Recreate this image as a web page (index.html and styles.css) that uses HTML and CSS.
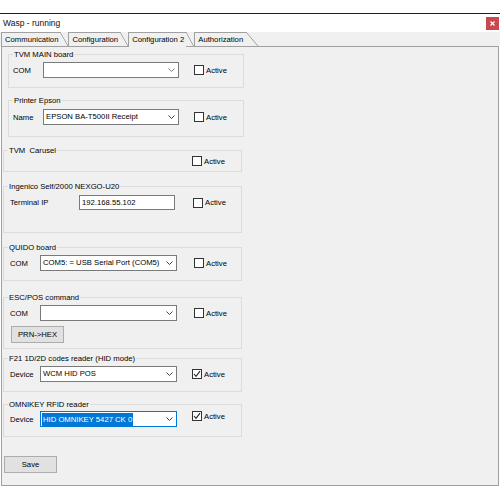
FILE: index.html
```html
<!DOCTYPE html>
<html>
<head>
<meta charset="utf-8">
<title>Wasp - running</title>
<link rel="stylesheet" href="styles.css">
</head>
<body>
<div class="screen">
  <div class="top-gap"></div>
  <div class="titlebar">
    <span class="title">Wasp - running</span>
    <span class="close"><svg width="5" height="5" viewBox="0 0 5 5"><path d="M0.5 0.5 L4.5 4.5 M4.5 0.5 L0.5 4.5" stroke="#fff" stroke-width="1.2" fill="none"/></svg></span>
  </div>
  <div class="tabstrip">
    <div class="tab">Communication</div>
    <div class="tab">Configuration</div>
    <div class="tab active">Configuration 2</div>
    <div class="tab last">Authorization</div>
  </div>
  <div class="panel">
    <div class="group g-main">
      <span class="legend">TVM MAIN board</span>
      <div class="row">
        <span class="label lw30">COM</span>
        <div class="combo"><span class="value"></span><svg class="chev" width="7" height="4" viewBox="0 0 7 4"><polyline points="0.5,0.5 3.5,3.5 6.5,0.5" fill="none" stroke="#888" stroke-width="1"/></svg></div>
        <div class="check c15"><span class="box"></span><span>Active</span></div>
      </div>
    </div>

    <div class="group g-printer">
      <span class="legend">Printer Epson</span>
      <div class="row">
        <span class="label lw30">Name</span>
        <div class="combo"><span class="value">EPSON BA-T500II Receipt</span><svg class="chev" width="7" height="4" viewBox="0 0 7 4"><polyline points="0.5,0.5 3.5,3.5 6.5,0.5" fill="none" stroke="#444" stroke-width="1"/></svg></div>
        <div class="check c15"><span class="box"></span><span>Active</span></div>
      </div>
    </div>

    <div class="group g-carusel">
      <span class="legend">TVM&nbsp; Carusel</span>
      <div class="row">
        <div class="check"><span class="box"></span><span>Active</span></div>
      </div>
    </div>

    <div class="group g-ingenico">
      <span class="legend">Ingenico Self/2000 NEXGO-U20</span>
      <div class="row">
        <span class="label lw69">Terminal IP</span>
        <div class="field">192.168.55.102</div>
        <div class="check c18"><span class="box"></span><span>Active</span></div>
      </div>
    </div>

    <div class="group g-quido">
      <span class="legend">QUIDO board</span>
      <div class="row">
        <span class="label lw30">COM</span>
        <div class="combo wide"><span class="value">COM5: = USB Serial Port (COM5)</span><svg class="chev" width="7" height="4" viewBox="0 0 7 4"><polyline points="0.5,0.5 3.5,3.5 6.5,0.5" fill="none" stroke="#444" stroke-width="1"/></svg></div>
        <div class="check"><span class="box"></span><span>Active</span></div>
      </div>
    </div>

    <div class="group g-escpos">
      <span class="legend">ESC/POS command</span>
      <div class="row">
        <span class="label lw30">COM</span>
        <div class="combo wide"><span class="value"></span><svg class="chev" width="7" height="4" viewBox="0 0 7 4"><polyline points="0.5,0.5 3.5,3.5 6.5,0.5" fill="none" stroke="#444" stroke-width="1"/></svg></div>
        <div class="check"><span class="box"></span><span>Active</span></div>
      </div>
      <button class="btn prn">PRN-&gt;HEX</button>
    </div>

    <div class="group g-f21">
      <span class="legend">F21 1D/2D codes reader (HID mode)</span>
      <div class="row">
        <span class="label lw30">Device</span>
        <div class="combo wide"><span class="value">WCM HID POS</span><svg class="chev" width="7" height="4" viewBox="0 0 7 4"><polyline points="0.5,0.5 3.5,3.5 6.5,0.5" fill="none" stroke="#444" stroke-width="1"/></svg></div>
        <div class="check c15"><span class="box"><svg width="8" height="8" viewBox="0 0 8 8"><path d="M1 4 L3 6.3 L7 1.2" fill="none" stroke="#222" stroke-width="1.1"/></svg></span><span>Active</span></div>
      </div>
    </div>

    <div class="group g-omni">
      <span class="legend">OMNIKEY RFID reader</span>
      <div class="row">
        <span class="label lw30">Device</span>
        <div class="combo wide focus"><span class="value sel">HID OMNIKEY 5427 CK 0</span><svg class="chev" width="7" height="4" viewBox="0 0 7 4"><polyline points="0.5,0.5 3.5,3.5 6.5,0.5" fill="none" stroke="#444" stroke-width="1"/></svg></div>
        <div class="check c15 top"><span class="box"><svg width="8" height="8" viewBox="0 0 8 8"><path d="M1 4 L3 6.3 L7 1.2" fill="none" stroke="#222" stroke-width="1.1"/></svg></span><span>Active</span></div>
      </div>
    </div>

    <button class="btn save">Save</button>
  </div>
</div>
</body>
</html>
```

FILE: styles.css
```css
* { box-sizing: border-box; }
html, body { margin: 0; padding: 0; background: #fff; }
body {
  width: 500px;
  height: 500px;
  overflow: hidden;
  font-family: "Liberation Sans", Arial, sans-serif;
  font-size: 7.7px;
  color: #000;
}
.top-gap { height: 14px; border-bottom: 1px solid #1e1e1e; }
.titlebar {
  height: 18px;
  display: flex;
  align-items: center;
  justify-content: space-between;
  padding: 0 1px 0 3px;
  background: #fff;
}
.title { font-size: 8.5px; color: #111; }
.close {
  width: 13px;
  height: 13px;
  background: #c9474e;
  display: flex;
  align-items: center;
  justify-content: center;
}
.close svg { display: block; }

.tabstrip {
  height: 14px;
  background: #f0f0f0;
  display: flex;
  align-items: flex-start;
  padding-left: 1px;
}
.tab {
  height: 14px;
  line-height: 13px;
  padding: 1px 10px 0 4px;
  white-space: nowrap;
  background:
    linear-gradient(#a0a0a0, #a0a0a0) left top / calc(100% - 8px) 1px no-repeat,
    linear-gradient(#a0a0a0, #a0a0a0) left top / 1px 100% no-repeat,
    linear-gradient(to bottom left, transparent calc(50% - 0.7px), #9a9a9a 50%, transparent calc(50% + 0.7px)) right top / 8px 100% no-repeat;
}
.tab.active {
  position: relative;
  z-index: 1;
  height: 15px;
  margin-bottom: -1px;
  background:
    linear-gradient(#a0a0a0, #a0a0a0) left top / calc(100% - 8px) 1px no-repeat,
    linear-gradient(#a0a0a0, #a0a0a0) left top / 1px 100% no-repeat,
    linear-gradient(to bottom left, transparent calc(50% - 0.7px), #9a9a9a 50%, transparent calc(50% + 0.7px)) right top / 8px 100% no-repeat,
    linear-gradient(#f0f0f0, #f0f0f0) 1px bottom / calc(100% - 9px) 1px no-repeat;
}
.tab.last {
  padding-right: 15px;
  background:
    linear-gradient(#a0a0a0, #a0a0a0) left top / calc(100% - 12px) 1px no-repeat,
    linear-gradient(#a0a0a0, #a0a0a0) left top / 1px 100% no-repeat,
    linear-gradient(to bottom left, transparent calc(50% - 0.7px), #9a9a9a 50%, transparent calc(50% + 0.7px)) right top / 12px 100% no-repeat;
}

.panel {
  margin-left: 1px;
  width: 498px;
  height: 440px;
  border: 1px solid #a0a0a0;
  background: #f0f0f0;
  padding-top: 7px;
}

.group {
  position: relative;
  border: 1px solid #dcdcdc;
  width: 239px;
  margin-left: 1px;
}
.legend {
  position: absolute;
  top: -5px;
  left: 4px;
  line-height: 9px;
  padding: 0 1px;
  background: #f0f0f0;
  white-space: nowrap;
}
.g-main { margin-left: 6px; width: 236px; height: 34px; padding: 7px 0 0 4px; }
.g-printer { margin: 12px 0 0 6px; width: 236px; height: 37px; padding: 8px 0 0 4px; }
.g-carusel { margin-top: 13px; height: 22px; padding: 5px 0 0 188px; }
.g-ingenico { margin-top: 14px; height: 47px; padding: 8px 0 0 6px; }
.g-quido { margin-top: 14px; height: 34px; padding: 7px 0 0 6px; }
.g-escpos { margin-top: 16px; height: 52px; padding: 7px 0 0 6px; }
.g-f21 { margin-top: 9px; height: 34px; padding: 7px 0 0 6px; }
.g-omni { margin-top: 12px; height: 33px; padding: 6px 0 0 6px; }

.row { display: flex; align-items: center; }
.label { white-space: nowrap; }
.lw30 { width: 30px; }
.lw69 { width: 69px; }

.combo {
  width: 136px;
  height: 16px;
  border: 1px solid #7a7a7a;
  background: #fff;
  display: flex;
  align-items: center;
  justify-content: space-between;
  padding: 0 3px 0 2px;
}
.combo.wide { width: 137px; }
.combo.focus { border-color: #0078d7; padding-left: 1px; }
.value { white-space: nowrap; line-height: 12px; }
.value.sel { background: #0078d7; color: #fff; padding: 0 1px; line-height: 13px; }
.chev { display: block; flex: none; }

.field {
  width: 96px;
  height: 15px;
  border: 1px solid #7a7a7a;
  background: #fff;
  line-height: 13px;
  padding-left: 2px;
}

.check {
  display: flex;
  align-items: center;
  gap: 2px;
  margin-left: 17px;
  white-space: nowrap;
}
.g-carusel .check { margin-left: 0; }
.check.c15 { margin-left: 15px; }
.check.c18 { margin-left: 18px; }
.check.top { align-self: flex-start; }
.box {
  width: 10px;
  height: 10px;
  border: 1px solid #333;
  background: #fff;
  display: flex;
  align-items: center;
  justify-content: center;
}
.box svg { display: block; }

.btn {
  font: inherit;
  color: #000;
  background: #e1e1e1;
  border: 1px solid #adadad;
  padding: 0;
  margin: 0;
  display: block;
}
.prn { width: 53px; height: 17px; margin: 5px 0 0 1px; }
.save { width: 53px; height: 17px; margin: 19px 0 0 2px; }
```
